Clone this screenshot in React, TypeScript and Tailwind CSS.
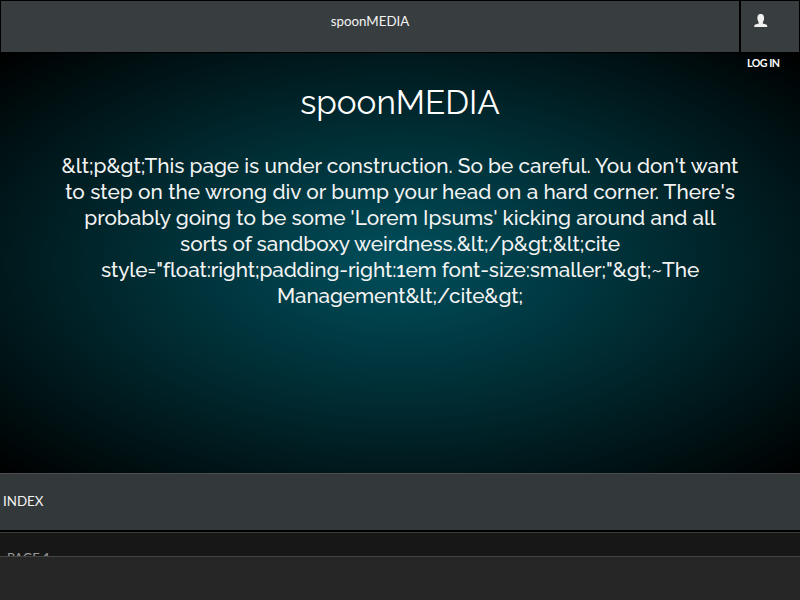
const introLines = [
  { text: "&lt;p&gt;This page is under construction. So be careful. You don't want", tracking: "tracking-[-0.03px]" },
  { text: "to step on the wrong div or bump your head on a hard corner. There's", tracking: "tracking-[0.03px]" },
  { text: "probably going to be some 'Lorem Ipsums' kicking around and all", tracking: "tracking-[-0.03px]" },
  { text: "sorts of sandboxy weirdness.&lt;/p&gt;&lt;cite", tracking: "tracking-[-0.065px]" },
  { text: 'style="float:right;padding-right:1em font-size:smaller;"&gt;~The', tracking: "tracking-[-0.12px]" },
  { text: "Management&lt;/cite&gt;", tracking: "tracking-[-0.12px]" },
];

function UserIcon() {
  return (
    <svg width="14" height="14" viewBox="0 0 14 14" fill="currentColor" aria-hidden="true">
      <path d="M4 1.200C4.500.4 5.500 0 6.700 0s2.200.4 2.700 1.200c.6.9.7 2.100.6 3.300.2.500 0 1.300-.3 1.700-.2.900-.5 1.600-.9 2.100v1.100l3.300 1.200c.9.400 1.200 1 1.200 2.400H.2c0-1.400.3-2 1.200-2.400l3.300-1.200V8.300c-.4-.5-.7-1.200-.9-2.100-.4-.4-.5-1.200-.3-1.700C3.300 3.300 3.400 2.100 4 1.200z" />
    </svg>
  );
}

function Header() {
  return (
    <header className="flex h-[53px] gap-[2px] bg-black px-px pt-px pb-px">
      <div className="w-[738px] bg-[#383d40] pt-[11px] text-center text-[13.33px] leading-[18px]">
        <span className="text-[#f3f3f3]">spoonMEDIA</span>
      </div>
      <div className="w-[58px] bg-[#383d40] pt-[13px] pl-[13px] text-[#f0f0f0]">
        <UserIcon />
        <div className="-ml-[7px] mt-[28px] whitespace-nowrap text-[10.67px] font-bold leading-[14px] tracking-[-0.6px] [word-spacing:0.5px] text-white">LOG IN</div>
      </div>
    </header>
  );
}

export default function App() {
  return (
    <div className="flex h-[600px] w-[800px] flex-col overflow-hidden bg-[#262626] font-['Lato',sans-serif]">
      <div className="z-10"><Header /></div>
      <main className="h-[420px] bg-[radial-gradient(ellipse_at_center,#004f5c_0%,#00292f_50%,#000000_100%)] pt-[29px] text-center font-['Raleway','Lato',sans-serif] text-white">
        <h1 className="text-[33.28px] leading-[42px]">spoonMEDIA</h1>
        <div className="mt-[29px] text-[20.8px] font-medium leading-[26px] text-[#f3f3f3]">
          {introLines.map((line) => (
            <div key={line.text} className={`whitespace-nowrap ${line.tracking}`}>{line.text}</div>
          ))}
        </div>
      </main>
      <nav className="h-[83px] overflow-hidden bg-[#171717]">
        <div className="h-[57px] border-t border-[#4b4d4e] bg-[#33383b] pt-[17px] pl-[3px] text-[13.33px] leading-[20px] text-[#f3f3f3]">INDEX</div>
        <div className="h-[2px] bg-black" />
        <div className="h-[24px] border-t border-[#3a3a3a] pt-[15px] pl-[7px] text-[13px] leading-[20px] text-[#999]">PAGE 1</div>
      </nav>
      <footer className="h-[44px] border-t border-[#444] bg-[#262626]" />
    </div>
  );
}
